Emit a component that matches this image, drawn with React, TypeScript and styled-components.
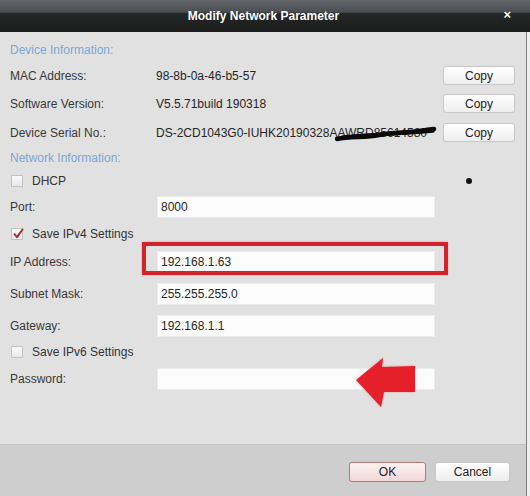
import React from "react";
import styled, { createGlobalStyle } from "styled-components";

const GlobalStyle = createGlobalStyle`
  html, body {
    margin: 0;
    padding: 0;
    background: #efefef;
  }
  body {
    font-family: "Liberation Sans", Arial, sans-serif;
    font-size: 12px;
  }
`;

const Window = styled.div`
  width: 530px;
  height: 496px;
  display: flex;
  flex-direction: column;
  overflow: hidden;
  background: #eeeeee;
`;

const TitleBar = styled.div`
  height: 32px;
  flex-shrink: 0;
  display: grid;
  grid-template-columns: 1fr auto 1fr;
  align-items: center;
  background: linear-gradient(
    #62666b 0,
    #4a4d52 38%,
    #252627 42%,
    #1c1c1c 100%
  );
  color: #ffffff;
`;

const Title = styled.div`
  grid-column: 2;
  font-weight: bold;
  font-size: 12px;
  margin-top: -1px;
  margin-right: 3px;
`;

const CloseButton = styled.div`
  justify-self: end;
  padding-right: 19px;
  font-size: 13px;
  font-weight: bold;
  line-height: 1;
  margin-top: -3px;
  cursor: pointer;
`;

const Frame = styled.div`
  width: 527px;
  flex: 1;
  display: flex;
  flex-direction: column;
  border-right: 1px solid #7e7e7e;
  box-sizing: border-box;
`;

const Body = styled.div`
  flex: 1;
  background: #e1e1e1;
  padding: 6px 11px 0 10px;
`;

const Footer = styled.div`
  height: 52px;
  flex-shrink: 0;
  box-sizing: border-box;
  background: #cecece;
  border-top: 1px solid #c4c4c4;
  display: flex;
  justify-content: flex-end;
  align-items: flex-start;
  gap: 9px;
  padding: 17px 16px 0 0;
`;

const Row = styled.div<{ $h: number }>`
  position: relative;
  height: ${(p) => p.$h}px;
  display: flex;
  align-items: center;
`;

const Heading = styled.div`
  color: #7ba8d3;
  font-size: 12px;
`;

const Label = styled.div`
  width: 146px;
  flex-shrink: 0;
  color: #383838;
`;

const Value = styled.div`
  color: #262626;
  white-space: nowrap;
`;

const Field = styled.div`
  width: 278px;
  height: 22px;
  margin-left: 1px;
  box-sizing: border-box;
  background: #fcfcfc;
  border: 1px solid #ececec;
  padding-left: 3px;
  display: flex;
  align-items: center;
  color: #262626;
`;

const Button = styled.button<{ $primary?: boolean }>`
  font-family: "Liberation Sans", Arial, sans-serif;
  font-size: 12px;
  color: #222;
  height: 20px;
  padding: 0;
  border-radius: 3px;
  box-sizing: border-box;
  cursor: pointer;
  border: 1px solid ${(p) => (p.$primary ? "#b77a7a" : "#c9c9c9")};
  background: ${(p) =>
    p.$primary
      ? "linear-gradient(#fdf1f1, #f2d8d8)"
      : "linear-gradient(#ffffff, #eeeeee)"};
  box-shadow: 0 0 1px rgba(0, 0, 0, 0.08);
`;

const CopyButton = styled(Button)`
  width: 72px;
  height: 19px;
  margin-left: auto;
`;

const FooterButton = styled(Button)<{ $w: number }>`
  width: ${(p) => p.$w}px;
`;

const Check = styled.div`
  width: 12px;
  height: 12px;
  margin-left: 1px;
  margin-right: 9px;
  box-sizing: border-box;
  border: 1px solid #c3c3c3;
  background: linear-gradient(#fafafa, #e8e8e8);
  position: relative;
  svg {
    position: absolute;
    left: 0;
    top: -1px;
  }
`;

const CheckText = styled.div`
  color: #333;
`;

const Scribble = styled.svg`
  position: absolute;
  left: 325px;
  top: 5px;
`;

const Dot = styled.div`
  position: absolute;
  left: 456px;
  top: 9px;
  width: 6px;
  height: 6px;
  border-radius: 50%;
  background: #111;
`;

const Highlight = styled.div`
  position: absolute;
  left: 132px;
  top: -5px;
  width: 306px;
  height: 33px;
  box-sizing: border-box;
  border: 4px solid #d2232b;
  box-shadow: 0 0 2px rgba(210, 35, 43, 0.35);
`;

const Arrow = styled.svg`
  position: absolute;
  left: 345px;
  top: -7px;
  filter: drop-shadow(0 0 1px rgba(230, 40, 50, 0.45));
`;

type Info = { label: string; value: string; h: number };

const deviceRows: Info[] = [
  { label: "MAC Address:", value: "98-8b-0a-46-b5-57", h: 27 },
  { label: "Software Version:", value: "V5.5.71build 190318", h: 29 },
  {
    label: "Device Serial No.:",
    value: "DS-2CD1043G0-IUHK20190328AAWRD85614580",
    h: 29,
  },
];

const CheckBox = ({ checked, text }: { checked?: boolean; text: string }) => (
  <>
    <Check>
      {checked && (
        <svg width="12" height="12" viewBox="0 0 12 12">
          <path
            d="M2.5 6.2 L5 9.2 L10.5 1.5"
            fill="none"
            stroke="#a3302f"
            strokeWidth="2"
            strokeLinecap="round"
            strokeLinejoin="round"
          />
        </svg>
      )}
    </Check>
    <CheckText>{text}</CheckText>
  </>
);

const App = () => {
  return (
    <Window>
      <GlobalStyle />
      <TitleBar>
        <Title>Modify Network Parameter</Title>
        <CloseButton>×</CloseButton>
      </TitleBar>
      <Frame>
        <Body>
          <Row $h={24}>
            <Heading>Device Information:</Heading>
          </Row>
          {deviceRows.map((r, i) => (
            <Row $h={r.h} key={r.label}>
              <Label>{r.label}</Label>
              <Value>{r.value}</Value>
              {i === 2 && (
                <Scribble width="102" height="20" viewBox="0 0 102 20">
                  <path
                    d="M2 16 C16 13 30 15 44 12 S70 10 84 8 S96 6 99 6"
                    fill="none"
                    stroke="#0a0a0a"
                    strokeWidth="4.5"
                    strokeLinecap="round"
                  />
                  <path
                    d="M8 14 C30 11 55 12 98 8"
                    fill="none"
                    stroke="#0a0a0a"
                    strokeWidth="3.5"
                    strokeLinecap="round"
                  />
                </Scribble>
              )}
              <CopyButton>Copy</CopyButton>
            </Row>
          ))}
          <Row $h={22}>
            <Heading>Network Information:</Heading>
          </Row>
          <Row $h={24}>
            <CheckBox text="DHCP" />
            <Dot />
          </Row>
          <Row $h={27}>
            <Label>Port:</Label>
            <Field>8000</Field>
          </Row>
          <Row $h={27}>
            <CheckBox checked text="Save IPv4 Settings" />
          </Row>
          <Row $h={29}>
            <Label>IP Address:</Label>
            <Field>192.168.1.63</Field>
            <Highlight />
          </Row>
          <Row $h={36}>
            <Label>Subnet Mask:</Label>
            <Field>255.255.255.0</Field>
          </Row>
          <Row $h={28}>
            <Label>Gateway:</Label>
            <Field>192.168.1.1</Field>
          </Row>
          <Row $h={24}>
            <CheckBox text="Save IPv6 Settings" />
          </Row>
          <Row $h={30}>
            <Label>Password:</Label>
            <Field />
            <Arrow width="62" height="52" viewBox="0 0 62 52">
              <polygon
                points="1,23 28,1 27,10 60,9 60,35 29,35 26,50"
                fill="#e5202a"
              />
            </Arrow>
          </Row>
        </Body>
        <Footer>
          <FooterButton $primary $w={77}>
            OK
          </FooterButton>
          <FooterButton $w={75}>Cancel</FooterButton>
        </Footer>
      </Frame>
    </Window>
  );
};

export default App;
